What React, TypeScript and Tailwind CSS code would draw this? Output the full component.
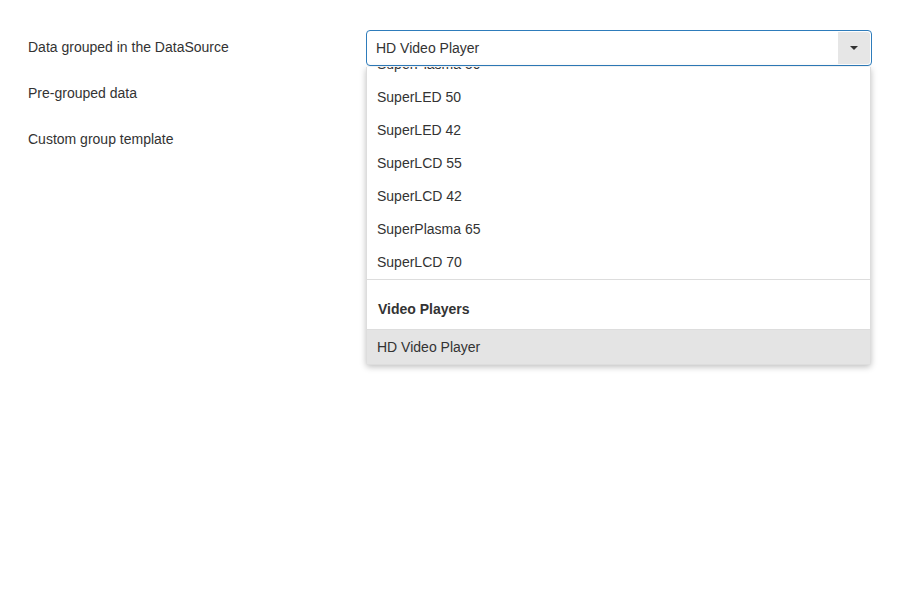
const rows = ['Data grouped in the DataSource', 'Pre-grouped data', 'Custom group template'];

const tvs = ['SuperPlasma 50', 'SuperLED 50', 'SuperLED 42', 'SuperLCD 55', 'SuperLCD 42', 'SuperPlasma 65', 'SuperLCD 70'];

const App = () => {
  return (
    <div className="w-[900px] h-[600px] bg-white text-[14px] text-[#333] font-['Liberation_Sans',Arial,sans-serif] relative">
      <div className="flex flex-col pt-[38px] pl-[28px] gap-[28px]">
        {rows.map((r) => (
          <div key={r} className="leading-[18px] h-[18px]">{r}</div>
        ))}
      </div>

      <div className="absolute left-[366px] top-[30px] w-[506px]">
        <div className="h-[36px] flex items-center border border-[#2e7cbb] rounded-[4px] bg-white">
          <span className="flex-1 pl-[9px]">HD Video Player</span>
          <span className="w-[32px] h-[32px] mr-[1px] bg-[#e6e6e6] rounded-r-[3px] flex items-center justify-center">
            <svg width="8" height="4" viewBox="0 0 8 4">
              <path d="M0 0h8L4 4z" fill="#333" />
            </svg>
          </span>
        </div>

        <div className="mt-[1px] w-[505px] bg-white border border-[#ddd] border-t-0 rounded-b-[3px] shadow-[0_2px_6px_rgba(0,0,0,0.25)]">
          {/* list is scrolled a bit, first item half hidden */}
          <div className="h-[213px] overflow-hidden border-b border-[#ddd]">
            <ul className="-mt-[19px]">
              {tvs.map((t) => (
                <li key={t} className="h-[33px] leading-[33px] pl-[10px]">{t}</li>
              ))}
            </ul>
          </div>
          <div className="h-[50px] pt-[20px] pl-[11px] font-bold leading-[18px] border-b border-[#ddd]">Video Players</div>
          <div className="h-[34px] leading-[34px] pl-[10px] bg-[#e4e4e4]">HD Video Player</div>
        </div>
      </div>
    </div>
  );
};

export default App;
